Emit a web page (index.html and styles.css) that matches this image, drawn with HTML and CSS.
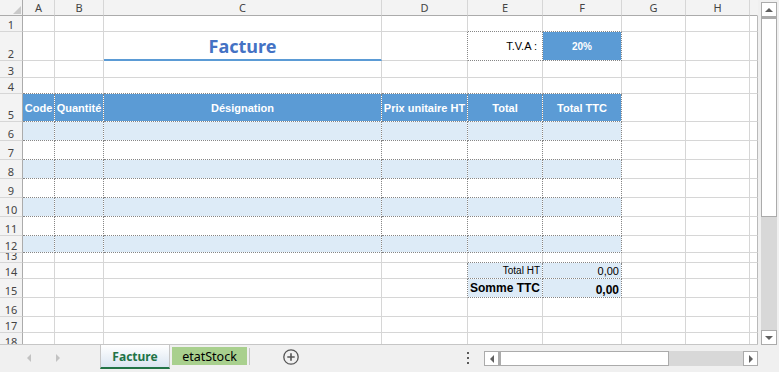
FILE: index.html
```html
<!DOCTYPE html>
<html lang="fr">
<head>
<meta charset="UTF-8">
<meta name="viewport" content="width=device-width, initial-scale=1.0">
<title>Facture</title>
<link rel="stylesheet" href="styles.css">
</head>
<body>
<div class="window">
    <div class="top">
        <div class="sheet">
            <div class="row h16">
                <div class="corner"><span class="tri"></span></div>
                <div class="ch">A</div><div class="ch">B</div><div class="ch">C</div><div class="ch">D</div>
                <div class="ch">E</div><div class="ch">F</div><div class="ch">G</div><div class="ch">H</div>
                <div class="ch end"></div>
            </div>
            <div class="row h16">
                <div class="rh">1</div>
                <div></div><div></div><div></div><div></div>
                <div class="bb"></div><div class="bb"></div>
                <div></div><div></div><div class="end"></div>
            </div>
            <div class="row h29">
                <div class="rh">2</div>
                <div></div><div></div>
                <div class="title">Facture</div>
                <div class="rb"></div>
                <div class="rb bb r tva">T.V.A :</div>
                <div class="rb bb rate">20%</div>
                <div></div><div></div><div class="end"></div>
            </div>
            <div class="row h17">
                <div class="rh">3</div>
                <div></div><div></div><div></div><div></div><div></div><div></div><div></div><div></div><div class="end"></div>
            </div>
            <div class="row h16">
                <div class="rh">4</div>
                <div class="bb"></div><div class="bb"></div><div class="bb"></div><div class="bb"></div><div class="bb"></div><div class="bb"></div>
                <div></div><div></div><div class="end"></div>
            </div>
            <div class="row h28">
                <div class="rh">5</div>
                <div class="hd rb bb">Code</div>
                <div class="hd rb bb">Quantité</div>
                <div class="hd rb bb">Désignation</div>
                <div class="hd rb bb">Prix unitaire HT</div>
                <div class="hd rb bb">Total</div>
                <div class="hd rb bb">Total TTC</div>
                <div></div><div></div><div class="end"></div>
            </div>
            <div class="row h19">
                <div class="rh">6</div>
                <div class="rb bb band"></div><div class="rb bb band"></div><div class="rb bb band"></div><div class="rb bb band"></div><div class="rb bb band"></div><div class="rb bb band"></div>
                <div></div><div></div><div class="end"></div>
            </div>
            <div class="row h19">
                <div class="rh">7</div>
                <div class="rb bb"></div><div class="rb bb"></div><div class="rb bb"></div><div class="rb bb"></div><div class="rb bb"></div><div class="rb bb"></div>
                <div></div><div></div><div class="end"></div>
            </div>
            <div class="row h19">
                <div class="rh">8</div>
                <div class="rb bb band"></div><div class="rb bb band"></div><div class="rb bb band"></div><div class="rb bb band"></div><div class="rb bb band"></div><div class="rb bb band"></div>
                <div></div><div></div><div class="end"></div>
            </div>
            <div class="row h19">
                <div class="rh">9</div>
                <div class="rb bb"></div><div class="rb bb"></div><div class="rb bb"></div><div class="rb bb"></div><div class="rb bb"></div><div class="rb bb"></div>
                <div></div><div></div><div class="end"></div>
            </div>
            <div class="row h19">
                <div class="rh">10</div>
                <div class="rb bb band"></div><div class="rb bb band"></div><div class="rb bb band"></div><div class="rb bb band"></div><div class="rb bb band"></div><div class="rb bb band"></div>
                <div></div><div></div><div class="end"></div>
            </div>
            <div class="row h19">
                <div class="rh">11</div>
                <div class="rb bb"></div><div class="rb bb"></div><div class="rb bb"></div><div class="rb bb"></div><div class="rb bb"></div><div class="rb bb"></div>
                <div></div><div></div><div class="end"></div>
            </div>
            <div class="row h17">
                <div class="rh">12</div>
                <div class="rb bb band"></div><div class="rb bb band"></div><div class="rb bb band"></div><div class="rb bb band"></div><div class="rb bb band"></div><div class="rb bb band"></div>
                <div></div><div></div><div class="end"></div>
            </div>
            <div class="row h10">
                <div class="rh">13</div>
                <div></div><div></div><div></div><div></div>
                <div class="bb"></div><div class="bb"></div>
                <div></div><div></div><div class="end"></div>
            </div>
            <div class="row h16">
                <div class="rh">14</div>
                <div></div><div></div><div></div>
                <div class="rb"></div>
                <div class="rb bb band r small">Total HT</div>
                <div class="rb bb band r">0,00</div>
                <div></div><div></div><div class="end"></div>
            </div>
            <div class="row h19">
                <div class="rh">15</div>
                <div></div><div></div><div></div>
                <div class="rb"></div>
                <div class="rb bb band r strong">Somme TTC</div>
                <div class="rb bb band r strong low">0,00</div>
                <div></div><div></div><div class="end"></div>
            </div>
            <div class="row h19">
                <div class="rh">16</div>
                <div></div><div></div><div></div><div></div><div></div><div></div><div></div><div></div><div class="end"></div>
            </div>
            <div class="row h16">
                <div class="rh">17</div>
                <div></div><div></div><div></div><div></div><div></div><div></div><div></div><div></div><div class="end"></div>
            </div>
            <div class="row h16">
                <div class="rh">18</div>
                <div></div><div></div><div></div><div></div><div></div><div></div><div></div><div></div><div class="end"></div>
            </div>
        </div>
        <div class="vscroll">
            <div class="vbtn"><span class="up"></span></div>
            <div class="vthumb"></div>
            <div class="vtrack"></div>
            <div class="vbtn"><span class="down"></span></div>
        </div>
    </div>
    <div class="tabbar">
        <div class="nav"><span class="prev"></span><span class="next"></span></div>
        <div class="tab active">Facture</div>
        <div class="tab stock">etatStock</div>
        <div class="sep"></div>
        <svg class="add" width="16" height="16" viewBox="0 0 16 16">
            <circle cx="8" cy="8" r="7.2" fill="none" stroke="#555" stroke-width="1.3"/>
            <path d="M8 4.3v7.4M4.3 8h7.4" stroke="#555" stroke-width="1.6"/>
        </svg>
        <div class="dots"><i></i><i></i><i></i></div>
        <div class="hscroll">
            <div class="hbtn"><span class="left"></span></div>
            <div class="hthumb"></div>
            <div class="htrack"></div>
            <div class="hbtn"><span class="right"></span></div>
        </div>
    </div>
</div>
</body>
</html>
```

FILE: styles.css
```css
body {
    margin: 0;
    background-color: #f0f0f0;
    font-family: "Liberation Sans", Arial, sans-serif;
}
.window {
    width: 779px;
    height: 372px;
    overflow: hidden;
}
.top {
    display: flex;
    height: 345px;
}
.sheet {
    width: 758px;
    height: 344px;
    overflow: hidden;
    background-color: #fff;
    border-bottom: 1px solid #c6c6c6;
}
.row {
    display: grid;
    grid-template-columns: 23px 32px 49px 278px 86px 75px 79px 64px 64px 8px;
}
.h10 { height: 10px; }
.h16 { height: 16px; }
.h17 { height: 17px; }
.h19 { height: 19px; }
.h28 { height: 28px; }
.h29 { height: 29px; }

/* cells */
.row > * {
    box-sizing: border-box;
    display: flex;
    align-items: center;
    overflow: hidden;
    white-space: nowrap;
    font-size: 11px;
    color: #000;
    border-right: 1px solid #d6d6d6;
    border-bottom: 1px solid #d6d6d6;
    background-clip: padding-box;
}
.rb {
    border-right: 1px dotted #858585;
}
.bb {
    border-bottom: 1px dotted #858585;
}
.band {
    background-color: #ddebf7;
}
.end {
    border-right-color: #b9b9b9;
}
.r {
    justify-content: flex-end;
    padding-right: 2px;
}
.small {
    font-size: 10px;
}
.strong {
    font-size: 12px;
    font-weight: bold;
}
.low {
    align-items: flex-end;
    line-height: 13px;
}

/* headers */
.ch, .rh, .corner {
    background-color: #f3f3f3;
    font-family: "Noto Sans", sans-serif;
    color: #444;
}
.ch {
    justify-content: center;
    border-bottom-color: #ababab;
}
.ch.end {
    border-right-color: #f3f3f3;
}
.rh {
    justify-content: center;
    align-items: flex-end;
    line-height: 13px;
    border-right-color: #ababab;
}
.corner {
    justify-content: flex-end;
    align-items: flex-end;
    padding: 0 1px 1px 0;
    border-right-color: #ababab;
    border-bottom-color: #ababab;
}
.tri {
    width: 0;
    height: 0;
    border-left: 8px solid transparent;
    border-bottom: 8px solid #c9c9c9;
}

/* content */
.title {
    justify-content: center;
    font-family: "Noto Sans", sans-serif;
    font-size: 18px;
    font-weight: bold;
    color: #4472c4;
    border-bottom: 2px solid #5b9bd5;
}
.tva {
    padding-right: 5px;
}
.rate {
    justify-content: center;
    background-color: #5b9bd5;
    color: #fff;
    font-size: 10px;
    font-weight: bold;
}
.hd {
    justify-content: center;
    background-color: #5b9bd5;
    color: #fff;
    font-weight: bold;
}

/* vertical scrollbar */
.vscroll {
    width: 16px;
    height: 343px;
    margin: 2px 0 0 3px;
    display: flex;
    flex-direction: column;
}
.vbtn {
    height: 15px;
    box-sizing: border-box;
    border: 1px solid #ababab;
    background-color: #fff;
    display: flex;
    align-items: center;
    justify-content: center;
}
.vthumb {
    height: 200px;
    box-sizing: border-box;
    border: 1px solid #ababab;
    border-top: 2px solid #ababab;
    background-color: #fff;
}
.vtrack {
    flex: 1;
    background-color: #d8d8d8;
}
.up, .down {
    width: 0;
    height: 0;
    border-left: 4px solid transparent;
    border-right: 4px solid transparent;
}
.up {
    border-bottom: 4px solid #606060;
}
.down {
    border-top: 4px solid #606060;
}

/* sheet tabs */
.tabbar {
    display: flex;
    height: 27px;
}
.nav {
    width: 100px;
    display: flex;
    align-items: center;
    padding-bottom: 2px;
    box-sizing: border-box;
}
.prev, .next {
    width: 0;
    height: 0;
    border-top: 4px solid transparent;
    border-bottom: 4px solid transparent;
}
.prev {
    margin-left: 27px;
    border-right: 4px solid #c2c2c2;
}
.next {
    margin-left: 25px;
    border-left: 4px solid #c2c2c2;
}
.tab {
    box-sizing: border-box;
    display: flex;
    align-items: center;
    justify-content: center;
    font-family: "Noto Sans", sans-serif;
}
.active {
    width: 70px;
    height: 24px;
    padding-top: 1px;
    border-left: 1px solid #c6c6c6;
    border-right: 1px solid #c6c6c6;
    border-bottom: 2px solid #217346;
    background: linear-gradient(#ffffff, #dae5f1);
    color: #217346;
    font-size: 12px;
    font-weight: bold;
}
.stock {
    width: 75px;
    height: 18px;
    margin: 2px 0 0 2px;
    background-color: #a9d08e;
    color: #000;
    font-size: 12.5px;
}
.sep {
    width: 1px;
    height: 17px;
    margin: 3px 0 0 2px;
    background-color: #c6c6c6;
}
.add {
    margin: 4px 0 0 33px;
}
.dots {
    display: flex;
    flex-direction: column;
    gap: 3px;
    margin: 7px 0 0 168px;
}
.dots i {
    width: 2px;
    height: 2px;
    background-color: #5a5a5a;
}

/* horizontal scrollbar */
.hscroll {
    display: flex;
    width: 274px;
    height: 15px;
    margin: 6px 0 0 15px;
}
.hbtn {
    width: 15px;
    box-sizing: border-box;
    border: 1px solid #ababab;
    background-color: #fff;
    display: flex;
    align-items: center;
    justify-content: center;
}
.hthumb {
    width: 170px;
    box-sizing: border-box;
    border: 1px solid #ababab;
    border-left: 2px solid #ababab;
    background-color: #fff;
}
.htrack {
    flex: 1;
    background-color: #d8d8d8;
}
.left, .right {
    width: 0;
    height: 0;
    border-top: 4px solid transparent;
    border-bottom: 4px solid transparent;
}
.left {
    border-right: 4px solid #606060;
}
.right {
    border-left: 4px solid #606060;
}
```
